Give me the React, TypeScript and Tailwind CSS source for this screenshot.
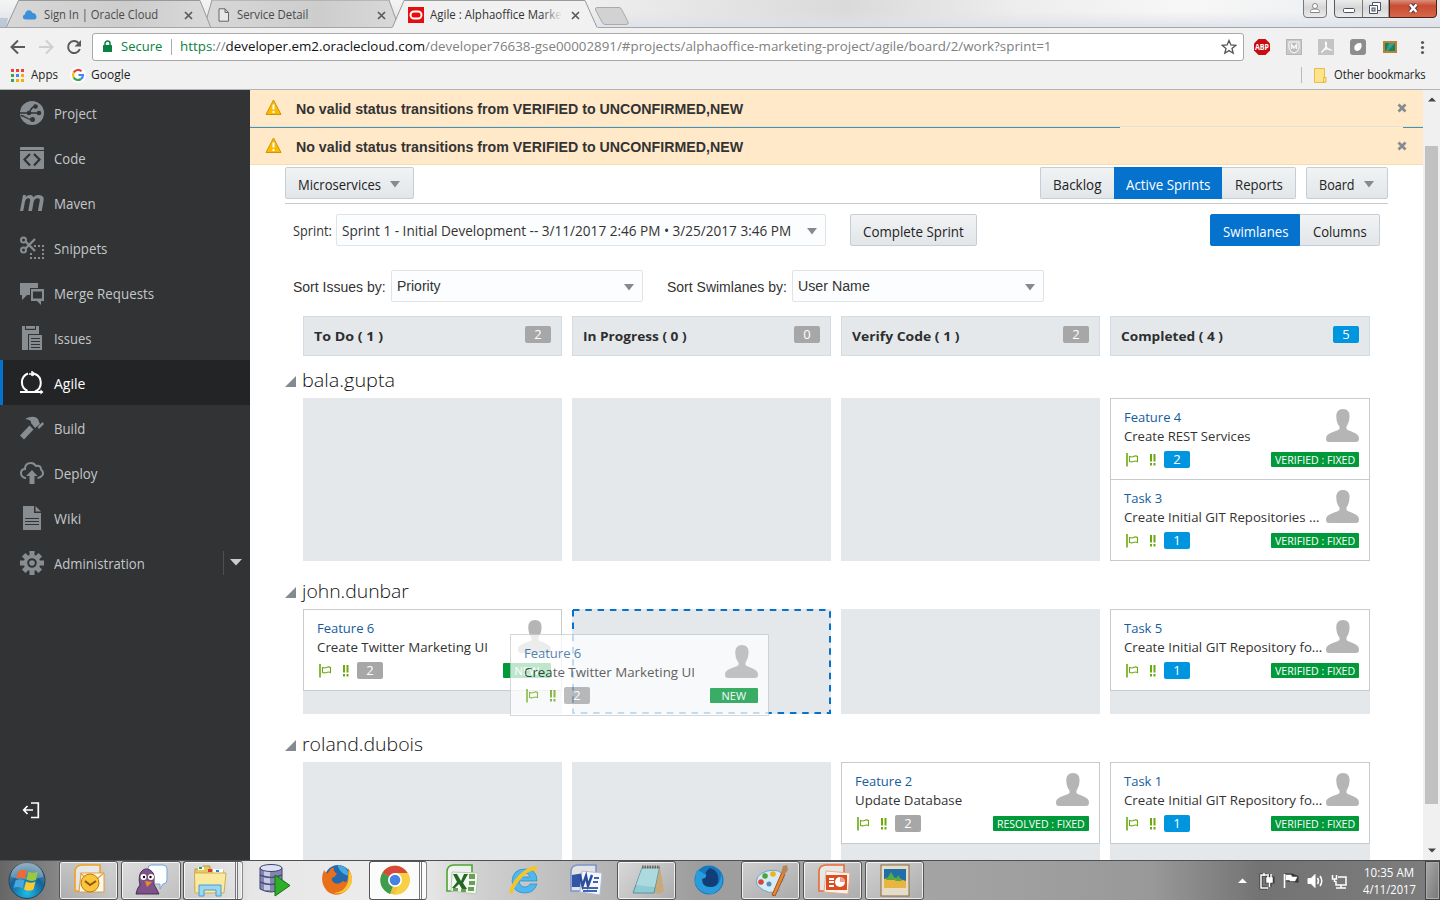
import React, { useLayoutEffect, useRef, useState, ReactNode } from 'react';

/* Text squeezed or stretched to a target width. */
function Fit({ w, className = '', children }: { w: number; className?: string; children: ReactNode }) {
  const ref = useRef<HTMLSpanElement>(null);
  const [scale, setScale] = useState(1);
  useLayoutEffect(() => {
    if (ref.current && ref.current.offsetWidth) setScale(w / ref.current.offsetWidth);
  }, [w]);
  return (
    <span className={`inline-block shrink-0 whitespace-nowrap ${className}`} style={{ width: w }}>
      <span ref={ref} className="inline-block origin-left" style={{ transform: `scaleX(${scale})` }}>
        {children}
      </span>
    </span>
  );
}

/* ---------- browser chrome ---------- */

const CloseX = () => (
  <svg width="9" height="9" viewBox="0 0 9 9" className="shrink-0">
    <path d="M1 1l7 7M8 1l-7 7" stroke="#5a5a5a" strokeWidth="1.7" />
  </svg>
);

function TabStrip() {
  return (
    <div className="relative h-[28px] overflow-hidden bg-gradient-to-b from-[#f4f4f4] to-[#dfe2e7]">
      <svg className="absolute inset-0" width="1440" height="28">
        <defs>
          <linearGradient id="tab" x1="0" y1="0" x2="1" y2="0">
            <stop offset="0" stopColor="#d7d7d7" />
            <stop offset="0.6" stopColor="#cdcdcd" />
            <stop offset="1" stopColor="#d9d9d9" />
          </linearGradient>
          <linearGradient id="sky" x1="0" y1="0" x2="1" y2="0">
            <stop offset="0" stopColor="#eee" />
            <stop offset="0.3" stopColor="#dadada" />
            <stop offset="0.5" stopColor="#ededed" />
            <stop offset="0.7" stopColor="#f7f7f7" />
            <stop offset="1" stopColor="#e9ebee" />
          </linearGradient>
          <linearGradient id="skyv" x1="0" y1="0" x2="0" y2="1">
            <stop offset="0.4" stopColor="#dfe3ea" stopOpacity="0" />
            <stop offset="1" stopColor="#dbe1ea" stopOpacity="0.9" />
          </linearGradient>
        </defs>
        <rect x="590" width="850" height="28" fill="url(#sky)" />
        <rect width="1440" height="28" fill="url(#skyv)" />
        <path d="M0 18L8 18L6 28H0z" fill="#a9b6c9" opacity=".6" />
        <path d="M204 28L212 0H389L399 28z" fill="url(#tab)" stroke="#999" />
        <path d="M6 28L18.500 .5H200L211 28z" fill="url(#tab)" stroke="#999" />
        <path d="M0 27.500H1440" stroke="#a5a5a9" />
        <path d="M392 28.500L404 .5H585L597.500 28.500z" fill="#f1f1f1" stroke="#999" />
        <path d="M392 28.500H598" stroke="#f1f1f1" strokeWidth="2" />
        <path d="M597 7.500H619Q621 7.500 622 10L628 22Q629 24.500 626 24.500H605Q603 24.500 602 22L595.500 10Q595 7.500 597 7.500z" fill="#d2d2d2" stroke="#aaa" />
      </svg>
      <div className="relative flex h-[30px] items-center text-[12px]">
        <div className="flex w-[211px] items-center pl-[22px] text-[#4a4a4a]">
          <svg width="16" height="12" viewBox="0 0 16 12"><path d="M4 10.500C0 10.500 0 6 3 5.500C3 2 8-1 10.500 4C14 3.500 16 9 13 10.500z" fill="#3c8fd8" /></svg>
          <Fit w={114} className="ml-[6px]">Sign In | Oracle Cloud</Fit>
          <span className="ml-[26px]"><CloseX /></span>
        </div>
        <div className="flex w-[193px] items-center pl-[7px] text-[#4a4a4a]">
          <svg width="12" height="14" viewBox="0 0 12 14"><path d="M1 .8H7L10.500 4.500V13.200H1zM7 .8V4.500H10.500" fill="#e8e8e8" stroke="#666" /></svg>
          <Fit w={71} className="ml-[7px]">Service Detail</Fit>
          <span className="ml-[69px]"><CloseX /></span>
        </div>
        <div className="flex items-center pl-[4px] text-[#333]">
          <svg width="16" height="16" viewBox="0 0 16 16"><path d="M0 0H16V16H0z" fill="#e60d0d" /><rect x="2.500" y="4.500" width="11" height="7" rx="3.500" fill="none" stroke="#fff" strokeWidth="2" /></svg>
          <span className="relative ml-[6px] w-[132px] overflow-hidden">
            <Fit w={132}>Agile : Alphaoffice Marke</Fit>
            <span className="absolute inset-y-0 right-0 w-5 bg-gradient-to-r from-transparent to-[#f1f1f1]" />
          </span>
          <span className="ml-[9px]"><CloseX /></span>
        </div>
      </div>
      <svg className="absolute right-0 top-0" width="140" height="20" viewBox="1300 0 140 20">
        <defs>
          <linearGradient id="wb" x1="0" y1="0" x2="0" y2="1"><stop offset="0" stopColor="#f2f2f2" /><stop offset=".5" stopColor="#d6d6d6" /><stop offset="1" stopColor="#ececec" /></linearGradient>
          <linearGradient id="wr" x1="0" y1="0" x2="0" y2="1"><stop offset="0" stopColor="#e0a698" /><stop offset=".4" stopColor="#c94c31" /><stop offset="1" stopColor="#d8694a" /></linearGradient>
        </defs>
        <path d="M1303.500-2V14Q1303.500 17.500 1307 17.500H1323Q1326.500 17.500 1326.500 14V-2z" fill="url(#wb)" stroke="#77797c" />
        <path d="M1334.500-2V14Q1334.500 17.500 1338 17.500H1389V-2z" fill="url(#wb)" stroke="#55585c" />
        <path d="M1389.500-2V17.500H1433Q1436.500 17.500 1436.500 14V-2z" fill="url(#wr)" stroke="#4d2018" />
        <path d="M1362.500 0V17" stroke="#77797c" />
        <circle cx="1315" cy="6" r="2.500" fill="#fff" stroke="#888" />
        <path d="M1310.500 12.500V11.500Q1310.500 9 1315 9Q1319.500 9 1319.500 11.500V12.500z" fill="#fff" stroke="#888" />
        <rect x="1343.500" y="8.500" width="11" height="4" rx="1" fill="#fff" stroke="#4b5366" />
        <path d="M1372.500 2.500H1380.500V10.500H1372.500z" fill="#fff" stroke="#4b5366" />
        <path d="M1369.500 5.500H1377.500V13.500H1369.500z" fill="#fff" stroke="#4b5366" />
        <rect x="1372" y="8" width="3" height="3" fill="#ccc" stroke="#4b5366" />
        <path d="M1410 4.500L1416.500 12M1416.500 4.500L1410 12" stroke="#5b3b42" strokeWidth="4.500" />
        <path d="M1410 4.500L1416.500 12M1416.500 4.500L1410 12" stroke="#fff" strokeWidth="2.500" />
      </svg>
    </div>
  );
}

function Toolbar() {
  return (
    <div className="h-[62px] border-b border-[#b6b4b6] bg-[#f1f1f1]">
      <div className="flex h-[37px] items-center">
        <svg width="92" height="37" viewBox="0 28 92 37" fill="none" strokeWidth="2">
          <path d="M25 47H12M18 40.500L11.500 47L18 53.500" stroke="#5a5a5a" />
          <path d="M39 47H52M46 40.500L52.500 47L46 53.500" stroke="#cfcfcf" />
          <path d="M78.500 43A6 6 0 1 0 79.800 49" stroke="#5a5a5a" />
          <path d="M81 40V46.500H74.500z" fill="#5a5a5a" />
        </svg>
        <div className="flex h-[28px] w-[1152px] items-center rounded-[3px] border border-[#a8a8a8] bg-white pl-[9px] text-[13px]">
          <svg width="10" height="13" viewBox="0 0 10 13" className="ml-px"><rect y="5" width="9" height="7" rx=".5" fill="#0b8043" /><path d="M2 6V3.500A2.500 2.500 0 0 1 7 3.500V6" fill="none" stroke="#0b8043" strokeWidth="1.500" /></svg>
          <Fit w={41} className="ml-[8px] mt-px text-[#0b8043]">Secure</Fit>
          <span className="ml-[9px] h-[16px] w-px bg-[#aaa]" />
          <Fit w={871} className="ml-[8px] mt-px text-[#808080]">
            <span className="text-[#0b8043]">https</span>://<span className="text-[#111]">developer.em2.oraclecloud.com</span>/developer76638-gse00002891/#projects/alphaoffice-marketing-project/agile/board/2/work?sprint=1
          </Fit>
          <svg width="16" height="16" viewBox="0 0 16 16" className="ml-[170px]"><path d="M8 1.500L9.900 6L14.700 6.400L11 9.500L12.200 14.200L8 11.600L3.800 14.200L5 9.500L1.300 6.400L6.100 6z" fill="none" stroke="#555" strokeWidth="1.300" /></svg>
        </div>
        <svg width="196" height="37" viewBox="1244 28 196 37">
          <path d="M1258.500 39H1265.500L1270 43.500V50.500L1265.500 55H1258.500L1254 50.500V43.500z" fill="#c70d12" />
          <text x="1255" y="50" fontSize="8.500" fontWeight="bold" fill="#fff" textLength="14" lengthAdjust="spacingAndGlyphs" fontFamily="Open Sans, sans-serif">ABP</text>
          <rect x="1286.500" y="39.500" width="15" height="15" fill="#c9c9c9" stroke="#b5b5b5" />
          <path d="M1289 42H1299V48Q1298 52 1294 53Q1290 52 1289 48z" fill="#bbb" stroke="#fff" />
          <path d="M1291.500 49V44.500L1294 48L1296.500 44.500V49" fill="none" stroke="#f6f6f6" strokeWidth="1.500" />
          <rect x="1318" y="39" width="16" height="16" fill="#c4c4c4" />
          <path d="M1326 42C1328 46 1324 50 1321.500 52.500C1323 49 1328 48 1331 50C1328 50 1325 47 1325.500 42z" fill="none" stroke="#fff" strokeWidth="1.200" />
          <rect x="1350" y="39" width="16" height="16" rx="3" fill="#8d8d8d" />
          <path d="M1357 51C1352 50 1354 42 1361 43C1363 47 1360 51 1357 51z" fill="#fff" />
          <rect x="1383" y="41" width="14" height="12" fill="#b98332" />
          <rect x="1385" y="43" width="10" height="8" fill="#148067" />
          <path d="M1389 43H1395L1388 51H1386z" fill="#57b39c" opacity=".6" />
          <circle cx="1422.500" cy="42.500" r="1.600" fill="#5a5a5a" /><circle cx="1422.500" cy="47.500" r="1.600" fill="#5a5a5a" /><circle cx="1422.500" cy="52.500" r="1.600" fill="#5a5a5a" />
        </svg>
      </div>
      <div className="flex h-[20px] items-center pl-[11px] text-[12px] text-[#222]">
        <svg width="13" height="13" viewBox="0 0 13 13">
          <path d="M0 0h3v3H0zM5 0h3v3H5zM10 0h3v3h-3z" fill="#ea4335" />
          <path d="M0 5h3v3H0zM0 10h3v3H0z" fill="#34a853" /><path d="M5 5h3v3H5z" fill="#4285f4" />
          <path d="M10 5h3v3h-3zM5 10h3v3H5zM10 10h3v3h-3z" fill="#fbab05" />
        </svg>
        <Fit w={27} className="ml-[7px]">Apps</Fit>
        <svg width="16" height="16" viewBox="0 0 16 16" className="ml-[12px]" fill="none" strokeWidth="2.200">
          <circle cx="8" cy="8" r="8" fill="#fff" />
          <path d="M11.500 4.300A5 5 0 0 0 3.700 5.500" stroke="#ea4335" /><path d="M3.700 5.500A5 5 0 0 0 3.700 10.500" stroke="#fbbc05" />
          <path d="M3.700 10.500A5 5 0 0 0 11 12" stroke="#34a853" /><path d="M11 12A5 5 0 0 0 13 8H8.500" stroke="#4285f4" />
        </svg>
        <Fit w={39} className="ml-[5px]">Google</Fit>
        <span className="ml-auto h-[16px] w-px bg-[#bbb]" />
        <svg width="13" height="15" viewBox="0 0 13 15" className="ml-[12px]"><path d="M.5.5H10.500V14.500H.5z" fill="#fee38d" stroke="#e6bd45" /><rect x="9.500" y="9.500" width="2.500" height="4.500" fill="#fee38d" stroke="#e6bd45" /></svg>
        <Fit w={92} className="ml-[7px] mr-[14px]">Other bookmarks</Fit>
      </div>
    </div>
  );
}

/* ---------- sidebar ---------- */

const icons: Record<string, ReactNode> = {
  Project: (
    <>
      <circle cx="12" cy="12" r="12" />
      <g stroke="#323335" strokeWidth="1.300" fill="none"><path d="M0 12H19M9 12C11 8 12 5.500 15 5.500M1 14.500C5 14.500 6 18.500 12 18.500" /></g>
      <g fill="#323335"><circle cx="9" cy="12" r="2.300" /><circle cx="19" cy="12" r="2.300" /><circle cx="15.500" cy="5.500" r="2.300" /><circle cx="12.500" cy="18.500" r="2.500" /></g>
    </>
  ),
  Code: (
    <>
      <path d="M0 2Q0 1 1 1H23Q24 1 24 2V4H0zM0 5H24V22Q24 23 23 23H1Q0 23 0 22z" />
      <path d="M10 8L4.500 13.500L10 19.500M14 8L19.500 13.500L14 19.500" fill="none" stroke="#323335" strokeWidth="2.200" />
    </>
  ),
  Maven: <path d="M3.200 20H0L3 4H6L5.600 6Q8 3.700 10.300 4Q12.800 4 13.300 6.200Q15.800 3.600 19 4Q24.600 4.400 23.600 9.500L21.700 20H17.900L19.700 10Q20.400 7 17.600 7.200Q14.300 7.500 13.600 11L12 20H8.300L10 10Q10.600 7 8.200 7.200Q5.700 7.400 4.900 11z" />,
  Snippets: (
    <>
      <g fill="none" stroke="#878d90" strokeWidth="2"><circle cx="3.500" cy="4" r="2.500" /><circle cx="3.500" cy="14" r="2.500" /><path d="M5.500 5.500L15 15M5.500 12.500L15 3" strokeWidth="2.400" /></g>
      <g fill="#878d90"><path d="M14 9h2v2h-2zM18 9h2v2h-2zM22 9h2v2h-2zM22 13h2v2h-2zM22 17h2v2h-2zM22 21h2v2h-2zM18 21h2v2h-2zM14 21h2v2h-2zM10 21h2v2h-2zM10 17h2v2h-2z" /></g>
    </>
  ),
  'Merge Requests': <><path d="M0 2H18V7H10V14H7L2 19V14H0z" /><path fillRule="evenodd" d="M11 8H24V20H21V24L17 20H11zM13 10.500V17.500H22V10.500z" /></>,
  Issues: <><path d="M2 0H5V4H16V0H19V8H8V24H2z" /><rect x="6" width="9" height="2.800" /><path d="M9 9H22V24H9z" /><path d="M11 12.500H20M11 15.500H20M11 18.500H20M11 21.500H20" stroke="#323335" /></>,
  Agile: (
    <g fill="none" stroke="#fff" strokeWidth="2"><path d="M7.500 20A9.500 9.500 0 0 1 8 2.500M15 3A9.500 9.500 0 0 1 15 20.500M0 21H22" /><path d="M12.500.2L16 2.800L12.500 5.500zM20.500 18.500L23.500 21L20.500 23.500z" fill="#fff" stroke="none" /><path d="M12 0V5M9 3H14" strokeWidth="1.500" /></g>
  ),
  Build: <><path d="M5 3Q12-1 17 2Q19 4 19 6L20 8L15 12L11 7Q12 4 5 3z" /><path d="M9.500 9.500L13.500 13.500L4 23.500L0 19.500z" /><path d="M17.500 11L22.500 6L24 8L19 13z" /></>,
  Deploy: <><path d="M6 17H5Q1 16 1 11.500Q1.500 8 5 8Q5 2 11 2Q14 2 16 5Q21 4 21 8.500Q24 11 22.500 14Q21 16.500 17.500 17" fill="none" stroke="#878d90" strokeWidth="2" /><path d="M12 9L17.500 15H14.500V23H9.500V15H6z" /></>,
  Wiki: <><path d="M3 0H14V7H21V24H3zM15.500 0L21 5.500H15.500z" /><path d="M5 12.500H19M5 15.500H19M5 18.500H19" stroke="#323335" strokeWidth="1.200" /></>,
  Administration: (
    <>
      <g stroke="#878d90" strokeWidth="5"><path d="M12 0V24M0 12H24M3.700 3.700L20.300 20.300M20.300 3.700L3.700 20.300" /></g>
      <circle cx="12" cy="12" r="8.300" /><circle cx="12" cy="12" r="3.800" fill="none" stroke="#323335" strokeWidth="2" />
    </>
  ),
};

const nav: [string, number][] = [
  ['Project', 43], ['Code', 32], ['Maven', 42], ['Snippets', 53], ['Merge Requests', 100], ['Issues', 37],
  ['Agile', 31], ['Build', 31], ['Deploy', 44], ['Wiki', 27], ['Administration', 91],
];

function Sidebar() {
  return (
    <aside className="flex w-[250px] shrink-0 flex-col bg-[#323335]">
      {nav.map(([name, w]) => (
        <div key={name} className={`flex h-[45px] shrink-0 items-center border-l-[3px] pl-[17px] text-[14px] ${name === 'Agile' ? 'border-[#0572ce] bg-[#232426] text-white' : 'border-transparent text-[#c3c7ca]'}`}>
          <svg width="24" height="24" viewBox="0 0 24 24" fill="#878d90">{icons[name]}</svg>
          <Fit w={w} className="ml-[10px] mt-px">{name}</Fit>
          {name === 'Administration' && (
            <span className="ml-auto flex h-[24px] w-[27px] items-center border-l border-[#4d5052] pl-[6px]">
              <svg width="12" height="7" viewBox="0 0 12 7"><path d="M0 0H12L6 6.500z" fill="#c9cdcf" /></svg>
            </span>
          )}
        </div>
      ))}
      <svg width="18" height="18" viewBox="0 0 18 18" className="ml-[22px] mt-[216px]" fill="none" stroke="#fff" strokeWidth="1.700"><path d="M9 2H16.300V16.500H9M11 9H2M5.500 5L1.700 9L5.500 13" /></svg>
    </aside>
  );
}

/* ---------- board ---------- */

const Arrow = ({ className = '' }: { className?: string }) => (
  <svg width="10" height="7" viewBox="0 0 10 7" className={`shrink-0 ${className}`}><path d="M0 0H10L5 6.500z" fill="#848a8f" /></svg>
);

function Button({ label, w, className, active, arrow }: { label: string; w: number; className: string; active?: boolean; arrow?: boolean }) {
  return (
    <div className={`flex h-[32px] shrink-0 items-center justify-center border text-[14px] ${active ? 'border-[#0572ce] bg-[#0572ce] text-white' : 'border-[#c4ced7] bg-gradient-to-b from-[#f1f3f4] to-[#e2e6e9] text-[#222]'} ${className}`}>
      <Fit w={w} className="mt-[2px]">{label}</Fit>
      {arrow && <Arrow className="ml-[9px] mt-[2px]" />}
    </div>
  );
}

function Select({ label, w, className, low }: { label: string; w: number; className: string; low?: boolean }) {
  return (
    <div className={`flex h-[32px] shrink-0 items-center justify-between rounded-[2px] border border-[#dfe4e7] bg-[#fcfdfe] pl-[5px] text-[14px] text-[#333] ${className}`}>
      <Fit w={w} className={low ? 'mt-px' : ''}>{label}</Fit>
      <Arrow className="mr-[8px] mt-[2px]" />
    </div>
  );
}

function Banner() {
  return (
    <div className="flex h-[37px] shrink-0 items-center border-b border-[#fddcab] bg-[#ffe9c9] pl-[15px] text-[14px] font-bold text-[#333]">
      <svg width="17" height="17" viewBox="0 0 17 17" className="-mt-[2px]"><path d="M8.500 1L16 15.500H1z" fill="#fbb901" stroke="#c99702" strokeLinejoin="round" /><path d="M7.500 5.500H9.500V10.500H7.500zM7.500 12H9.500V14H7.500z" fill="#fff" /></svg>
      <Fit w={447} className="ml-[14px] mt-[2px] font-['Liberation_Sans',sans-serif]">No valid status transitions from VERIFIED to UNCONFIRMED,NEW</Fit>
      <svg width="10" height="10" viewBox="0 0 10 10" className="ml-auto mr-[16px]"><path d="M1.500 1.500L8.500 8.500M8.500 1.500L1.500 8.500" stroke="#848b91" strokeWidth="2.700" /></svg>
    </div>
  );
}

type Item = { title: string; tw: number; text: string; w: number; pts: number; blue?: boolean; status: string; sw: number };
const fixed = { status: 'VERIFIED : FIXED', sw: 80, blue: true };
const f6: Item = { title: 'Feature 6', tw: 57, text: 'Create Twitter Marketing UI', w: 171, pts: 2, status: 'NEW', sw: 25 };

function Card({ item, className = '' }: { item: Item; className?: string }) {
  return (
    <div className={`flex h-[82px] justify-between border border-[#c8cbcd] bg-white pl-[13px] pr-[10px] text-[13px] leading-[19px] text-[#333] ${className}`}>
      <div className="flex w-0 flex-col pt-[9px]">
        <Fit w={item.tw} className="text-[#145c9e]">{item.title}</Fit>
        <Fit w={item.w}>{item.text}</Fit>
        <div className="mt-[5px] flex h-[17px] items-center">
          <svg width="32" height="15" viewBox="0 0 32 15" className="ml-[2px] shrink-0" fill="none" stroke="#6aaa0f"><path d="M1 1V14.500" strokeWidth="1.600" /><path d="M3.500 4.500Q6 5.500 8 4.200Q10 3.500 11.500 4.500V9.500Q9.500 8.500 7.500 9.500Q5.500 10.300 3.500 9.500z" strokeWidth="1.100" /><path d="M25 2V9.500M28.500 2V9.500M25 11V13.500M28.500 11V13.500" strokeWidth="2" /></svg>
          <Points n={item.pts} blue={item.blue} className="ml-[6px]" />
        </div>
      </div>
      <div className="flex shrink-0 flex-col items-end pt-[9px]">
        <svg width="34" height="35" viewBox="0 0 34 35" className="-mr-px"><path d="M17 1C21.500 1 24 4 23.500 9C23.300 14 21.500 17 20.500 18.500V21C23 24 33 24 33 30.500Q33 34 30 34H3Q0 34 0 30.500C0 24 11 24 13.500 21V18.500C12 17 10.500 14 10.300 9C10 4 12.500 1 17 1z" fill="#b5b5b5" /></svg>
        <div className={`mt-[9px] flex h-[15px] items-center justify-center rounded-[1px] bg-[#009a3a] text-[11px] font-medium text-white ${item.sw === 80 ? 'w-[88px]' : item.sw === 25 ? 'w-[48px]' : 'w-[96px]'}`}>
          <Fit w={item.sw}>{item.status}</Fit>
        </div>
      </div>
    </div>
  );
}

const Points = ({ n, blue, className = '' }: { n: number; blue?: boolean; className?: string }) => (
  <span className={`flex h-[17px] w-[26px] shrink-0 items-center justify-center rounded-[2px] text-[13px] font-normal text-white ${blue ? 'bg-[#0096df]' : 'bg-[#a7a7a7]'} ${className}`}>{n}</span>
);

const cols: [string, number, number, boolean][] = [
  ['To Do ( 1 )', 69, 2, false], ['In Progress ( 0 )', 104, 0, false], ['Verify Code ( 1 )', 107, 2, false], ['Completed ( 4 )', 102, 5, true],
];

const lanes: { name: string; w: number; h: string; cells: Item[][]; drop?: number }[] = [
  { name: 'bala.gupta', w: 93, h: 'h-[163px]', cells: [[], [], [], [
    { title: 'Feature 4', tw: 57, text: 'Create REST Services', w: 127, pts: 2, ...fixed },
    { title: 'Task 3', tw: 38, text: 'Create Initial GIT Repositories ...', w: 195, pts: 1, ...fixed }]] },
  { name: 'john.dunbar', w: 107, h: 'h-[105px]', drop: 1, cells: [[f6], [], [], [
    { title: 'Task 5', tw: 38, text: 'Create Initial GIT Repository fo...', w: 198, pts: 1, ...fixed }]] },
  { name: 'roland.dubois', w: 121, h: 'h-[105px]', cells: [[], [], [
    { title: 'Feature 2', tw: 57, text: 'Update Database', w: 107, pts: 2, status: 'RESOLVED : FIXED', sw: 88 }], [
    { title: 'Task 1', tw: 38, text: 'Create Initial GIT Repository fo...', w: 198, pts: 1, ...fixed }]] },
];

function Board() {
  return (
    <main className="relative flex w-[1173px] shrink-0 flex-col overflow-hidden bg-white">
      <Banner />
      <div className="flex h-px shrink-0 bg-[#3795cf]">
        <span className="ml-[870px] w-[283px] bg-[#eeeeee]" />
      </div>
      <Banner />
      <div className="ml-[35px] mt-[2px] flex h-[37px] w-[1103px] shrink-0 border-b border-[#c8cacb]">
        <Button label="Microservices" w={83} arrow className="mr-auto w-[129px] rounded-[2px] pr-[2px]" />
        <Button label="Backlog" w={48} className="w-[74px] rounded-l-[2px] border-r-0 pr-[2px]" />
        <Button label="Active Sprints" w={84} active className="w-[108px]" />
        <Button label="Reports" w={48} className="w-[74px] rounded-r-[2px] border-l-0" />
        <Button label="Board" w={36} arrow className="ml-[10px] w-[82px] rounded-[2px] pr-[2px]" />
      </div>
      <div className="ml-[43px] mt-[10px] flex h-[32px] w-[1087px] shrink-0 items-center text-[14px] text-[#333]">
        <Fit w={39}>Sprint:</Fit>
        <Select label="Sprint 1 - Initial Development -- 3/11/2017 2:46 PM • 3/25/2017 3:46 PM" w={449} low className="ml-[4px] w-[490px]" />
        <Button label="Complete Sprint" w={101} className="ml-[24px] mr-auto w-[127px] rounded-[2px]" />
        <Button label="Swimlanes" w={65} active className="w-[90px] rounded-l-[2px]" />
        <Button label="Columns" w={54} className="w-[80px] rounded-r-[2px] border-l-0" />
      </div>
      <div className="ml-[43px] mt-[24px] flex h-[32px] shrink-0 items-center font-['Liberation_Sans',sans-serif] text-[14px] text-[#333]">
        <Fit w={93} className="mt-[2px]">Sort Issues by:</Fit>
        <Select label="Priority" w={44} className="ml-[5px] w-[252px]" />
        <Fit w={120} className="ml-[24px] mt-[2px]">Sort Swimlanes by:</Fit>
        <Select label="User Name" w={72} className="ml-[5px] w-[252px]" />
      </div>
      <div className="ml-[53px] mt-[14px] grid w-[1067px] shrink-0 grid-cols-[259px_259px_259px_260px] gap-[10px]">
        {cols.map(([label, w, n, blue]) => (
          <div key={label} className="flex h-[40px] items-center justify-between border border-[#d3dce3] bg-[#e4e8eb] pl-[10px] pr-[10px] text-[13px] font-bold text-[#2e2e2e]">
            <Fit w={w} className="mt-px">{label}</Fit>
            <Points n={n} blue={blue} className="-mt-[3px]" />
          </div>
        ))}
      </div>
      {lanes.map((lane, i) => (
        <section key={lane.name} className={`shrink-0 ${i ? 'mt-[6px]' : ''}`}>
          <div className="ml-[35px] flex h-[42px] items-center text-[19px] font-light text-[#111]">
            <svg width="12" height="12" viewBox="0 0 12 12" className="mr-[5px] mt-[9px]"><path d="M11 0V11H0z" fill="#848a8f" /></svg>
            <Fit w={lane.w} className="mt-[6px]">{lane.name}</Fit>
          </div>
          <div className="ml-[53px] grid w-[1067px] grid-cols-[259px_259px_259px_260px] gap-[10px]">
            {lane.cells.map((cell, c) => (
              <div key={c} className={`relative bg-[#e4e8eb] ${lane.h}`}>
                {cell.map((item, k) => <Card key={k} item={item} className={k ? '-mt-px' : ''} />)}
                {lane.drop === c && (
                  <svg className="absolute inset-0" width="259" height="105"><rect x="1" y="1" width="257" height="103" fill="none" stroke="#0572ce" strokeWidth="2" strokeDasharray="6.500 5.800" /></svg>
                )}
              </div>
            ))}
          </div>
        </section>
      ))}
      <Card item={f6} className="absolute left-[260px] top-[544px] w-[259px] opacity-75" />
    </main>
  );
}

/* ---------- taskbar ---------- */

const App32 = ({ children }: { children: ReactNode }) => <svg width="34" height="34" viewBox="0 0 34 34" className="shrink-0">{children}</svg>;

const office = (c: string) => (
  <path d="M3 28V9Q3 2 10 2H28V12L24 28z" fill="#fff" fillOpacity=".6" stroke={c} strokeWidth="1.600" />
);

const tasks: { x: string; box?: boolean; el: ReactNode }[] = [
  { x: 'w-[59px] ml-[59px]', box: true, el: <>{office('#f2a21b')}<path d="M9 10H32V29H7z" fill="#fff8ea" stroke="#d9a040" /><path d="M8 10L20 20L32 10" fill="none" stroke="#e0a743" strokeWidth="1.500" /><circle cx="18" cy="20" r="9" fill="#fbc43b" stroke="#b97a0c" /><path d="M13 18L18 22L24 18" fill="none" stroke="#8a5a08" strokeWidth="2" /></> },
  { x: 'w-[60px] ml-[3px]', box: true, el: <><path d="M17 2H29Q33 2 33 6V17Q33 21 29 21L26 26L26 21H17Q14 21 14 17V6Q14 2 17 2z" fill="#fbfdff" stroke="#7aa3d6" /><path d="M2 31Q3 25 6 22Q4 14 7 9Q11 4 16 7Q21 10 20 17Q19 22 22 25L25 31z" fill="#7d5387" stroke="#4b2c57" /><circle cx="9.500" cy="14" r="3" fill="#fff" /><circle cx="17" cy="14" r="3" fill="#fff" /><circle cx="10" cy="14" r="1.200" /><circle cx="16.500" cy="14" r="1.200" /><path d="M11 18L18 19L13 24z" fill="#ef8c25" /></> },
  { x: 'w-[60px] ml-[2px]', box: true, el: <><path d="M2 6H10V3H17V7H30V26H2z" fill="#e8c863" stroke="#c19a3a" /><path d="M5 4H11V7H5zM20 6H30V10H20z" fill="#fff" /><path d="M6 4H9V6H6z" fill="#2ea22e" /><path d="M15 6H19V9H15z" fill="#d83a2d" /><path d="M23 7H26V9H23z" fill="#2788d8" /><path d="M1.500 10H33L31 30H2z" fill="#faeaa0" stroke="#cfae50" /><path d="M6 33V22H28V33H23V27H11V33z" fill="#9bd7f2" stroke="#4b9ccb" /></> },
  { x: 'w-[60px]', el: <><path d="M4 5V26Q15 32 26 26V5z" fill="#8387ae" stroke="#3f436e" /><path d="M8 6V27H14V8z" fill="#e6e8f8" opacity=".7" /><ellipse cx="15" cy="5" rx="11" ry="3.500" fill="#dfe1f4" stroke="#3f436e" /><path d="M4 12Q15 17 26 12M4 19Q15 24 26 19" fill="none" stroke="#4c5080" strokeWidth="1.500" /><path d="M19 12L34 22.500L19 33z" fill="#2fae2a" stroke="#137014" /></> },
  { x: 'w-[60px] ml-[4px]', el: <><circle cx="18" cy="15" r="13" fill="#2468ae" /><path d="M18 2Q28 3 29 13Q22 12 18 4z" fill="#43abe0" /><path d="M28 5Q36 17 27 27Q17 36 7 28Q-1 19 4 7Q6 11 8 10Q11 4 14 5Q13 8 16 10Q18 11 14 14Q10 15 13 19Q18 23 23 18Q29 23 28 5z" fill="#e8701b" /><path d="M29 7Q36 19 27 27Q20 32 14 30Q25 29 28 19z" fill="#fac635" /></> },
  { x: 'w-[58px] ml-[2px]', box: true, el: <><circle cx="17" cy="17" r="14.500" fill="#eac23c" /><path d="M17 17L4.500 9.800A14.500 14.500 0 0 1 29.600 10z" fill="#d6493c" /><path d="M17 17L12 31A14.500 14.500 0 0 1 4.500 9.700z" fill="#3e9c4d" /><path d="M17 10H30A14.500 14.500 0 0 1 16 31.500L22 20z" fill="#f7d046" /><circle cx="17" cy="17" r="7" fill="#fff" /><circle cx="17" cy="17" r="5.300" fill="#4682e4" /></> },
  { x: 'w-[60px] ml-[4px]', el: <>{office('#4ca62f')}<path d="M8 9L34 10L32 31L7 28z" fill="#f2f8ef" stroke="#b5cab0" /><path d="M9 11L13 11L17 18L20 11H24L19 20L23 26H18L15 21L11 25H8L13 19z" fill="#246725" /><path d="M25 11H31V16H25zM25 18H31V22H25zM24 24H30V28H24zM17 26H22V29H17zM9 25H14V28H9z" fill="#6a9e5c" /></> },
  { x: 'w-[60px] ml-[3px]', el: <><path d="M30 18H12Q13 24 18 24Q22 24 23 21H30Q27 30 18 30Q6 30 5 18Q6 6 18 6Q30 6 30 18zM12 14H23Q22 10 18 10Q13 10 12 14z" fill="#4fb8ee" stroke="#238bc9" strokeWidth=".7" /><path d="M5 31Q-1 31 7 18Q17 4 29 3Q32 4 28 10Q28 5 20 10Q8 20 5 31z" fill="#f5c528" /></> },
  { x: 'w-[60px] ml-[1px]', el: <>{office('#7a94ce')}<path d="M4 12V24H22V9z" fill="#3156a5" /><path d="M14 8L34 10L32 32L12 29z" fill="#f5f7fd" stroke="#b1bcda" /><path d="M12 12L14.500 23L18 13L20 23L24 12" fill="none" stroke="#2b4e9d" strokeWidth="2.500" /><path d="M26 15H31M25 19H30M15 25H30M15 28H29" stroke="#4264ae" strokeWidth="1.800" /></> },
  { x: 'w-[59px] ml-[2px]', box: true, el: <><path d="M12 4H30L34 28L30 31L4 27z" fill="#c9aa7c" /><path d="M12 5H29L24 30H3z" fill="#8fcbd3" stroke="#58949e" /><path d="M12 5H29L25 24L6 22z" fill="#c7e8ea" opacity=".55" /><path d="M12 4H30" stroke="#666" strokeWidth="3" strokeDasharray="1.500 1" /></> },
  { x: 'w-[60px] ml-[3px]', el: <><circle cx="17" cy="17" r="14.500" fill="#167ac0" /><path d="M18 5Q28 8 26 20Q19 29 11 21Q8 14 14 13Q12 9 18 5z" fill="#123d76" /><path d="M4 8Q8 7 12 11Q16 11 13 15L10 16Q10 24 18 24Q29 25 29 10Q34 25 20 31Q7 31 3 20z" fill="#299ddb" /></> },
  { x: 'w-[59px] ml-[2px]', box: true, el: <><path d="M3 22Q0 12 13 8Q27 5 30 14Q30 20 25 19Q20 22 26 27Q15 34 3 22z" fill="#d9eaf5" stroke="#6aa5cd" /><circle cx="11" cy="13" r="2.800" fill="#4ba53c" /><circle cx="7" cy="19" r="2.800" fill="#db4431" /><circle cx="19" cy="11" r="2.800" fill="#efb41c" /><circle cx="15" cy="21" r="2.500" fill="#4c91bd" /><path d="M18 32L28 9L31 11L21 33z" fill="#e88731" stroke="#a85218" /><path d="M27 10L29 3L33 2L34 7L30 12z" fill="#b98555" /></> },
  { x: 'w-[59px] ml-[3px]', box: true, el: <>{office('#e96b35')}<path d="M10 8L34 10L32 31L8 29z" fill="#fff0e9" stroke="#e3ad96" /><rect x="10" y="12" width="21" height="15" fill="#db4e20" /><path d="M13 16H18M13 19H18M13 23H18" stroke="#fff" strokeWidth="2" /><circle cx="24" cy="19" r="5" fill="#fff" /><path d="M24 19V14A5 5 0 0 1 29 19z" fill="#eda085" /></> },
  { x: 'w-[59px] ml-[3px]', box: true, el: <><rect x="3" y="2" width="28" height="31" fill="#e5dcc9" stroke="#8b6b3c" /><rect x="6" y="6" width="22" height="19" fill="#216fa8" /><path d="M6 16Q15 13 28 18V25H6z" fill="#e8b541" /><path d="M8 17L13 9L18 17zM17 18L20 12L24 18z" fill="#57aa3b" /></> },
];

function Taskbar() {
  return (
    <footer className="relative flex h-[40px] border-t border-[#4e5152] bg-[linear-gradient(90deg,#666_0px,#858585_55px,#bbb_110px,#b8b8b8_190px,#e6e6e6_250px,#eeeeee_410px,#d0d0d0_480px,#b6b6b6_600px,#9d9d9d_700px,#a5a5a5_900px,#999_1150px,#737373_1260px,#7d7d7d_1440px)]">
      <svg className="absolute left-[7px] top-0" width="40" height="39" viewBox="0 0 40 39">
        <defs><radialGradient id="orb" cx=".5" cy=".85" r=".8"><stop offset="0" stopColor="#20bce8" /><stop offset=".6" stopColor="#126498" /><stop offset="1" stopColor="#6b91a9" /></radialGradient></defs>
        <circle cx="20" cy="19.500" r="18" fill="url(#orb)" stroke="#24445a" />
        <path d="M4 16A16 15 0 0 1 36 16Q20 21 4 16z" fill="#fff" opacity=".25" />
        <path d="M11 11Q15 7 20 10L18 18Q13 15 9 18z" fill="#ee6a37" /><path d="M21.500 10.500Q26 13 31 10.500L29 19Q24 21 19.500 18.500z" fill="#9ac83e" />
        <path d="M8.500 19.500Q13 17 17.500 19.500L15.500 27.500Q11 25 6.500 27z" fill="#4aa6df" /><path d="M19 20.500Q24 23 28.500 20.500L26.500 28.500Q22 31 17 28.500z" fill="#fbc934" />
      </svg>
      {tasks.map((t, i) => (
        <div key={i} className={`flex shrink-0 items-center justify-center pb-px ${t.x} ${t.box ? `rounded-[3px] border border-[#555] shadow-[inset_0_0_0_1px_rgba(255,255,255,0.75)] ${i === 5 ? 'bg-white/80' : 'bg-gradient-to-br from-white/50 to-white/10'} ${i === 2 || i === 5 ? 'border-r-[#888] pr-[6px]' : ''}` : ''} relative`}>
          {(i === 2 || i === 5) && <span className="absolute inset-y-0 right-[4px] w-[3px] border-x border-[#777] bg-white/50" />}
          <App32>{t.el}</App32>
        </div>
      ))}
      <svg className="ml-auto shrink-0" width="120" height="39" viewBox="1236 861 120 39" fill="none">
        <path d="M1238 883L1242.500 878.500L1247 883z" fill="#fff" />
        <g stroke="#3a3a3a" strokeWidth="3"><path d="M1267 875H1261V888H1267M1270 874V878M1267 878H1273V882H1267zM1270 882V887" /><path d="M1284.500 874V888M1286 875H1292L1297 877V881L1286 880z" /></g>
        <g stroke="#fff" strokeWidth="1.500"><path d="M1267 875H1261V888H1268M1264 873V876" /><path d="M1267 878H1272V882H1267zM1268 874V878M1271 874V878M1269.500 882V887" fill="#fff" /><path d="M1284.500 874V888" strokeWidth="2" /><path d="M1286 875H1291L1292 877H1297L1295 881H1290V880H1286z" fill="#fff" strokeWidth=".5" /><path d="M1308 878.500H1311L1315 874.500V887.500L1311 883.500H1308z" fill="#fff" strokeWidth="1" /><path d="M1317.500 878Q1319.500 881 1317.500 884M1320 876Q1323.500 881 1320 886" /><path d="M1338 877H1346V885H1336V881M1341 885V888M1336 888H1346M1332.500 875V879H1336.500V875M1334.500 879V882" /></g>
      </svg>
      <div className="flex w-[66px] shrink-0 flex-col items-center justify-center pt-[1px] text-[12px] leading-[17px] text-white">
        <Fit w={50}>10:35 AM</Fit>
        <Fit w={53}>4/11/2017</Fit>
      </div>
      <div className="ml-[3px] h-[39px] w-[15px] shrink-0 border border-[#444] bg-gradient-to-br from-[#aaa] to-[#777] shadow-[inset_0_0_0_1px_#a9a9a9]" />
    </footer>
  );
}

export default function App() {
  return (
    <div className="flex h-[900px] w-[1440px] flex-col overflow-hidden bg-white font-['Open_Sans','Noto_Sans',sans-serif]">
      <TabStrip />
      <Toolbar />
      <div className="flex h-[770px] shrink-0">
        <Sidebar />
        <Board />
        <div className="flex w-[17px] shrink-0 flex-col items-center justify-between bg-[#f0f0f0] py-[7px]">
          <svg width="8" height="5" viewBox="0 0 8 5"><path d="M0 4.500H8L4 .5z" fill="#444" /></svg>
          <div className="-mt-px h-[658px] w-[13px] bg-[#c1c1c1]" />
          <svg width="8" height="5" viewBox="0 0 8 5"><path d="M0 .5H8L4 4.500z" fill="#444" /></svg>
        </div>
      </div>
      <Taskbar />
    </div>
  );
}
